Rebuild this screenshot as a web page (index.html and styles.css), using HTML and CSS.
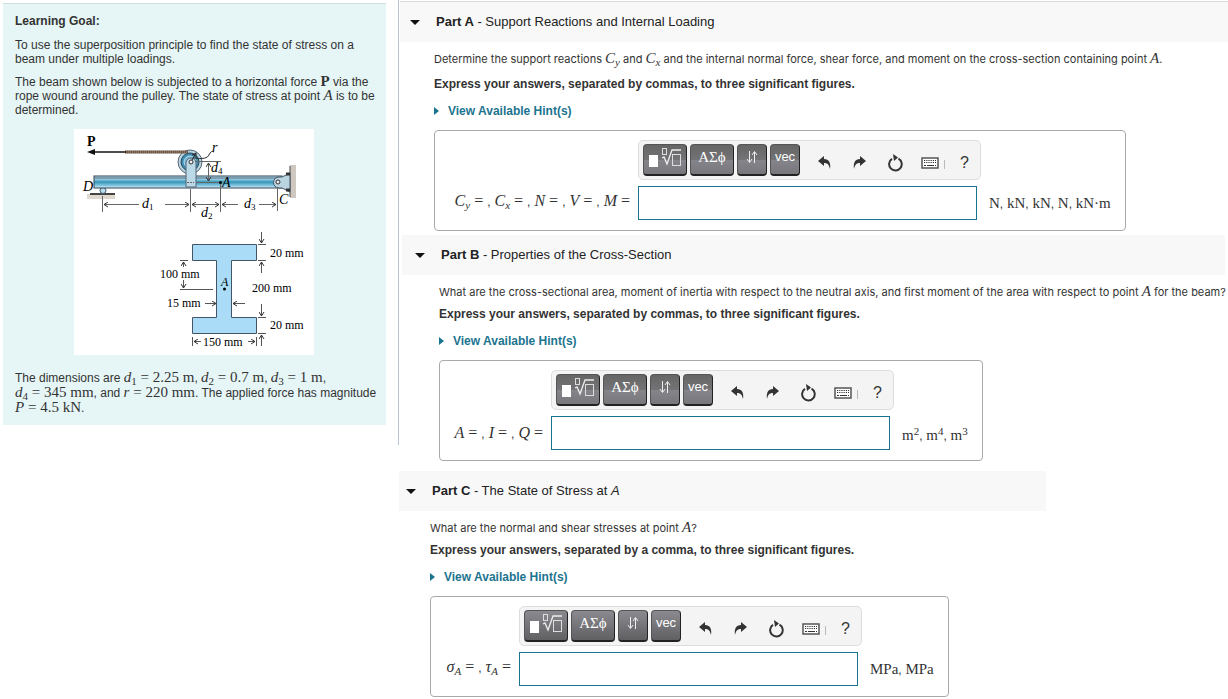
FILE: index.html
```html
<!DOCTYPE html>
<html lang="en">
<head>
    <meta charset="UTF-8">
    <meta name="viewport" content="width=device-width, initial-scale=1.0">
    <title>Superposition of Stresses</title>
    <link rel="stylesheet" href="styles.css">
</head>
<body>

    <!-- shared toolbar icons -->
    <svg class="sprite" aria-hidden="true">
        <symbol id="icon-template" viewBox="0 0 34 22">
            <rect x="1" y="9" width="9" height="12" fill="#fff"/>
            <path d="M14 12l2-1 3 7 5-14h9" fill="none" stroke="#eee" stroke-width="1.3"/>
            <rect x="14.500" y="2.500" width="4" height="6" fill="none" stroke="#ddd"/>
            <rect x="24.500" y="8.500" width="8" height="11" fill="none" stroke="#ddd"/>
        </symbol>
        <symbol id="icon-arrows" viewBox="0 0 12 14">
            <path d="M3.500 1v11M1 9l2.500 3.500L6 9M8.500 13V2M6 5l2.500-3.500L11 5" fill="none" stroke="#eee"/>
        </symbol>
        <symbol id="icon-undo" viewBox="0 0 14 14">
            <path d="M0 5L6 0v3c5 0 7 4 6 10-1-4-2-6-6-6v3z"/>
        </symbol>
        <symbol id="icon-redo" viewBox="0 0 14 14">
            <path d="M13 5L7 0v3C2 3 0 7 1 13c1-4 2-6 6-6v3z"/>
        </symbol>
        <symbol id="icon-reset" viewBox="0 0 16 18">
            <path d="M11.500 4.600A6.300 6.300 0 1 1 5 4.800" fill="none" stroke="#333" stroke-width="2"/>
            <path d="M6 0l5 3.500L7 7z"/>
        </symbol>
        <symbol id="icon-keyboard" viewBox="0 0 18 12">
            <rect x="1" y="1" width="16" height="10" fill="#fff" stroke="#555" stroke-width="1.500"/>
            <path d="M3 3.500h12M3 5.500h12" stroke="#333" stroke-width="1.200" stroke-dasharray="1.200 1"/>
            <path d="M3 8.500h2M6 8.500h7M14 8.500h1" stroke="#333" stroke-width="1.200"/>
        </symbol>
    </svg>

    <div class="page">
        <aside class="sidebar">
            <div class="goal">
                <h1>Learning Goal:</h1>
                <p>To use the superposition principle to find the state of stress on a<br>
                beam under multiple loadings.</p>
                <p>The beam shown below is subjected to a horizontal force <b class="math">P</b> via the rope wound around the pulley. The state of stress at point <i class="math">A</i> is to be determined.</p>

                <svg class="figure" viewBox="0 0 240 226" role="img" aria-label="Beam with pulley and its cross-section">
                    <defs>
                        <linearGradient id="beam" x1="0" y1="0" x2="0" y2="1">
                            <stop offset="0" stop-color="#b5dff0"/>
                            <stop offset="0.250" stop-color="#9fd3e9"/>
                            <stop offset="0.500" stop-color="#3593b5"/>
                            <stop offset="0.800" stop-color="#86c8e2"/>
                            <stop offset="1" stop-color="#d3eef8"/>
                        </linearGradient>
                        <marker id="tip" viewBox="0 0 6 6" refX="5" refY="3" markerWidth="6" markerHeight="6" orient="auto-start-reverse">
                            <path d="M1 0.500L5 3L1 5.500" fill="none" stroke="#333"/>
                        </marker>
                    </defs>

                    <!-- beam and supports -->
                    <rect x="13" y="65" width="28" height="5" fill="#ded8cf"/>
                    <path d="M16 65h25" stroke="#444" stroke-width="2"/>
                    <circle cx="29" cy="61.500" r="3" fill="#b5dff0" stroke="#456"/>
                    <rect x="216" y="36" width="6" height="33" fill="#cfc8c0"/>
                    <path d="M216 37v31" stroke="#444"/>
                    <rect x="20" y="47" width="188" height="12" fill="url(#beam)" stroke="#345"/>
                    <path d="M20 49h188" stroke="#567"/>
                    <path d="M216 44l-8 4h-3a5.500 5.500 0 0 0 0 11h3l8 4z" fill="#b9d3df" stroke="#456"/>
                    <circle cx="204" cy="53" r="2" fill="#eee" stroke="#333"/>
                    <path d="M212 45h4M212 61h4" stroke="#333" stroke-width="3"/>

                    <!-- pulley and rope -->
                    <circle cx="116" cy="33" r="12" fill="#bcd5e3" stroke="#567"/>
                    <circle cx="116" cy="33" r="9" fill="#3f8fb4" stroke="#245"/>
                    <circle cx="116" cy="33" r="6" fill="#79b6d2" stroke="#b7dcec"/>
                    <path d="M112 58V34a4.500 4.500 0 0 1 10 0v24z" fill="#bcd9e8" stroke="#567"/>
                    <circle cx="117" cy="33" r="2" fill="#eee" stroke="#333"/>
                    <path d="M51 23h63" stroke="#6b5544" stroke-width="3"/>
                    <path d="M52 23h62" stroke="#b29a80" stroke-dasharray="1 1"/>
                    <path d="M18 23h34" stroke="#111" stroke-width="1.500"/>
                    <path d="M13 23l8-3v6z" fill="#111"/>
                    <path d="M118 31l4-7" stroke="#222" marker-end="url(#tip)"/>
                    <path d="M120 29q13 2 15-3t5-3" fill="none" stroke="#333"/>

                    <!-- beam dimensions -->
                    <g fill="none" stroke="#666">
                        <path d="M28.500 67v16M116.500 60v23M146.500 54v29M203.500 58v24M121 32.500h26"/>
                        <path d="M113 53.500h7" stroke-dasharray="2 1"/>
                        <path d="M122 53.500h24"/>
                        <path d="M65 75.500H30" marker-end="url(#tip)"/>
                        <path d="M91 75.500h24" marker-end="url(#tip)"/>
                        <path d="M118 75.500h27" marker-start="url(#tip)" marker-end="url(#tip)"/>
                        <path d="M164 75.500h-16" marker-end="url(#tip)"/>
                        <path d="M185 75.500h17" marker-end="url(#tip)"/>
                        <path d="M134.500 34v18" marker-start="url(#tip)" marker-end="url(#tip)"/>
                    </g>
                    <circle cx="146.500" cy="53.500" r="1.500"/>
                    <g class="beam-label">
                        <text x="13" y="17" class="force">P</text>
                        <text x="9" y="62">D</text>
                        <text x="138" y="23">r</text>
                        <text x="148" y="58">A</text>
                        <text x="205" y="75">C</text>
                        <text x="68" y="79">d<tspan class="index" dy="2">1</tspan></text>
                        <text x="127" y="88">d<tspan class="index" dy="2">2</tspan></text>
                        <text x="170" y="79">d<tspan class="index" dy="2">3</tspan></text>
                        <text x="137" y="43">d<tspan class="index" dy="2">4</tspan></text>
                    </g>

                    <!-- cross-section -->
                    <path d="M118.500 115.500h64v16h-25v57h25v16h-64v-16h24v-57h-24z" fill="#aadcf7" stroke="#456"/>
                    <g fill="none" stroke="#555">
                        <path d="M184 115.500h8M184 131.500h8M184 188.500h8M184 204.500h8M106 131.500h8M106 160.500h33M118.500 208v9M182.500 208v9"/>
                        <path d="M187.500 103v11" marker-end="url(#tip)"/>
                        <path d="M187.500 144v-11" marker-end="url(#tip)"/>
                        <path d="M187.500 175v12" marker-end="url(#tip)"/>
                        <path d="M187.500 217v-11" marker-end="url(#tip)"/>
                        <path d="M109.500 138v-5" marker-end="url(#tip)"/>
                        <path d="M109.500 151v8" marker-end="url(#tip)"/>
                        <path d="M131 174.500h11" marker-end="url(#tip)"/>
                        <path d="M171 174.500h-12" marker-end="url(#tip)"/>
                        <path d="M127 212.500h-7" marker-end="url(#tip)"/>
                        <path d="M174 212.500h7" marker-end="url(#tip)"/>
                    </g>
                    <circle cx="150.500" cy="160" r="1.500"/>
                    <g class="section-label">
                        <text x="196" y="128">20 mm</text>
                        <text x="86" y="149">100 mm</text>
                        <text x="178" y="163">200 mm</text>
                        <text x="93" y="178">15 mm</text>
                        <text x="196" y="200">20 mm</text>
                        <text x="129" y="217">150 mm</text>
                        <text x="147" y="157" font-style="italic">A</text>
                    </g>
                </svg>

                <p class="dimensions">The dimensions are <span class="math"><i>d</i><sub>1</sub> = 2.25 m</span>, <span class="math"><i>d</i><sub>2</sub> = 0.7 m</span>, <span class="math"><i>d</i><sub>3</sub> = 1 m</span>,<br>
                <span class="math"><i>d</i><sub>4</sub> = 345 mm</span>, and <span class="math"><i>r</i> = 220 mm</span>. The applied force has magnitude <span class="math"><i>P</i> = 4.5 kN</span>.</p>
            </div>
        </aside>

        <main class="parts">
            <section class="part part-a">
                <h2 class="part-header">
                    <button type="button" class="part-toggle"><span class="caret"></span><span><b>Part A</b> - Support Reactions and Internal Loading</span></button>
                </h2>
                <div class="part-body">
                    <p class="question">Determine the support reactions <span class="math"><i>C<sub>y</sub></i></span> and <span class="math"><i>C<sub>x</sub></i></span> and the internal normal force, shear force, and moment on the cross-section containing point <i class="math">A</i>.</p>
                    <p class="instructions">Express your answers, separated by commas, to three significant figures.</p>
                    <a href="#" class="hints">View Available Hint(s)</a>
                    <form class="answer">
                        <div class="toolbar">
                            <button type="button" class="key key-wide" aria-label="Templates"><svg width="34" height="22"><use href="#icon-template"/></svg></button>
                            <button type="button" class="key key-wide greek">ΑΣϕ</button>
                            <button type="button" class="key" aria-label="Arrows"><svg width="12" height="14"><use href="#icon-arrows"/></svg></button>
                            <button type="button" class="key">vec</button>
                            <span class="tools">
                                <button type="button" class="tool" aria-label="Undo"><svg width="14" height="14"><use href="#icon-undo"/></svg></button>
                                <button type="button" class="tool" aria-label="Redo"><svg width="14" height="14"><use href="#icon-redo"/></svg></button>
                                <button type="button" class="tool" aria-label="Reset"><svg width="16" height="18"><use href="#icon-reset"/></svg></button>
                                <button type="button" class="tool tool-keyboard" aria-label="Keyboard shortcuts"><svg width="18" height="12"><use href="#icon-keyboard"/></svg></button>
                                <button type="button" class="tool tool-help">?</button>
                            </span>
                        </div>
                        <label for="answer-a" class="math"><i>C<sub>y</sub></i> = <s>,</s> <i>C<sub>x</sub></i> = <s>,</s> <i>N</i> = <s>,</s> <i>V</i> = <s>,</s> <i>M</i> =</label>
                        <input type="text" id="answer-a">
                        <span class="units math">N<s>,</s> kN<s>,</s> kN<s>,</s> N<s>,</s> kN·m</span>
                    </form>
                </div>
            </section>

            <section class="part part-b">
                <h2 class="part-header">
                    <button type="button" class="part-toggle"><span class="caret"></span><span><b>Part B</b> - Properties of the Cross-Section</span></button>
                </h2>
                <div class="part-body">
                    <p class="question">What are the cross-sectional area, moment of inertia with respect to the neutral axis, and first moment of the area with respect to point <i class="math">A</i> for the beam?</p>
                    <p class="instructions">Express your answers, separated by commas, to three significant figures.</p>
                    <a href="#" class="hints">View Available Hint(s)</a>
                    <form class="answer">
                        <div class="toolbar">
                            <button type="button" class="key key-wide" aria-label="Templates"><svg width="34" height="22"><use href="#icon-template"/></svg></button>
                            <button type="button" class="key key-wide greek">ΑΣϕ</button>
                            <button type="button" class="key" aria-label="Arrows"><svg width="12" height="14"><use href="#icon-arrows"/></svg></button>
                            <button type="button" class="key">vec</button>
                            <span class="tools">
                                <button type="button" class="tool" aria-label="Undo"><svg width="14" height="14"><use href="#icon-undo"/></svg></button>
                                <button type="button" class="tool" aria-label="Redo"><svg width="14" height="14"><use href="#icon-redo"/></svg></button>
                                <button type="button" class="tool" aria-label="Reset"><svg width="16" height="18"><use href="#icon-reset"/></svg></button>
                                <button type="button" class="tool tool-keyboard" aria-label="Keyboard shortcuts"><svg width="18" height="12"><use href="#icon-keyboard"/></svg></button>
                                <button type="button" class="tool tool-help">?</button>
                            </span>
                        </div>
                        <label for="answer-b" class="math"><i>A</i> = <s>,</s> <i>I</i> = <s>,</s> <i>Q</i> =</label>
                        <input type="text" id="answer-b">
                        <span class="units math">m<sup>2</sup><s>,</s> m<sup>4</sup><s>,</s> m<sup>3</sup></span>
                    </form>
                </div>
            </section>

            <section class="part part-c">
                <h2 class="part-header">
                    <button type="button" class="part-toggle"><span class="caret"></span><span><b>Part C</b> - The State of Stress at <i>A</i></span></button>
                </h2>
                <div class="part-body">
                    <p class="question">What are the normal and shear stresses at point <i class="math">A</i>?</p>
                    <p class="instructions">Express your answers, separated by a comma, to three significant figures.</p>
                    <a href="#" class="hints">View Available Hint(s)</a>
                    <form class="answer">
                        <div class="toolbar">
                            <button type="button" class="key key-wide" aria-label="Templates"><svg width="34" height="22"><use href="#icon-template"/></svg></button>
                            <button type="button" class="key key-wide greek">ΑΣϕ</button>
                            <button type="button" class="key" aria-label="Arrows"><svg width="12" height="14"><use href="#icon-arrows"/></svg></button>
                            <button type="button" class="key">vec</button>
                            <span class="tools">
                                <button type="button" class="tool" aria-label="Undo"><svg width="14" height="14"><use href="#icon-undo"/></svg></button>
                                <button type="button" class="tool" aria-label="Redo"><svg width="14" height="14"><use href="#icon-redo"/></svg></button>
                                <button type="button" class="tool" aria-label="Reset"><svg width="16" height="18"><use href="#icon-reset"/></svg></button>
                                <button type="button" class="tool tool-keyboard" aria-label="Keyboard shortcuts"><svg width="18" height="12"><use href="#icon-keyboard"/></svg></button>
                                <button type="button" class="tool tool-help">?</button>
                            </span>
                        </div>
                        <label for="answer-c" class="math"><i>σ<sub>A</sub></i> = <s>,</s> <i>τ<sub>A</sub></i> =</label>
                        <input type="text" id="answer-c">
                        <span class="units math">MPa<s>,</s> MPa</span>
                    </form>
                </div>
            </section>
        </main>
    </div>

</body>
</html>
```
FILE: styles.css
```css
* {
    box-sizing: border-box;
}
body {
    margin: 0;
    background: #fff;
    color: #333;
    font-family: "Liberation Sans", Arial, sans-serif;
    font-size: 12px;
    line-height: 14px;
}
h1, h2, p {
    margin: 0;
    font-size: 12px;
}
button {
    padding: 0;
    border: none;
    background: none;
    color: inherit;
    font: inherit;
    cursor: pointer;
}
.sprite {
    display: none;
}
.page {
    display: grid;
    grid-template-columns: 399px minmax(0, 1fr);
    align-items: start;
}

/* math */
.math {
    font-family: "Liberation Serif", "Times New Roman", serif;
    font-size: 15px;
    line-height: 0;
    white-space: nowrap;
}
.math sub, .math sup {
    font-size: 11px;
    line-height: 0;
}
.math sub {
    vertical-align: -3px;
}
.math sup {
    vertical-align: 5px;
}
.math s {
    font-family: "Liberation Sans", Arial, sans-serif;
    font-size: 12px;
    text-decoration: none;
}

/* learning goal */
.sidebar {
    padding: 3px 12px 20px 3px;
    border-right: 1px solid #b8c4d6;
}
.goal {
    padding: 10px 8px 9px 12px;
    border-top: 1px solid #cfdfe0;
    background: #e6f5f6;
}
.goal h1 {
    margin-bottom: 10px;
}
.goal p {
    margin-bottom: 9px;
}
.figure {
    display: block;
    width: 240px;
    height: 226px;
    margin: 12px auto 16px 59px;
    background: #fff;
}
.goal .dimensions {
    margin-bottom: 0;
    line-height: 15px;
}
.beam-label {
    font: italic 14px "Liberation Serif", serif;
}
.beam-label .force {
    font-style: normal;
    font-weight: bold;
}
.beam-label .index {
    font-size: 9px;
    font-style: normal;
}
.section-label {
    font: 12px "Liberation Serif", serif;
}

/* parts */
.part {
    --indent: 10px;
    --label: 186px;
}
.part-a {
    margin-left: 1px;
    padding-top: 1px;
}
.part-b {
    --indent: 13px;
    --label: 94px;
    margin: 4px 3px 0;
}
.part-c {
    --indent: 7px;
    --label: 71px;
    margin-top: 10px;
}
.part-header {
    display: flex;
    height: 40px;
    padding-left: var(--indent);
    background: #f8f8f8;
    font-weight: normal;
}
.part-a .part-header {
    height: 41px;
    border-top: 1px solid #d5dbdd;
}
.part-c .part-header {
    width: 78%;
}
.part-toggle {
    display: flex;
    align-items: center;
    gap: 16px;
    color: #222;
    font-size: 13px;
}
.caret {
    border: 5px solid transparent;
    border-top: 5px solid #111;
    border-bottom: none;
}
.part-body {
    padding: 10px 0 0 calc(var(--indent) + 24px);
}
.question {
    margin-bottom: 8px;
    font-family: Inter, Arial, sans-serif;
    font-size: 11px;
}
.part-a .question {
    margin-bottom: 11px;
}
.part-b .question {
    white-space: nowrap;
}
.instructions {
    margin-bottom: 13px;
    font-weight: bold;
}
.hints {
    display: flex;
    align-items: center;
    gap: 9px;
    width: fit-content;
    margin-bottom: 12px;
    color: #1b748f;
    font-weight: bold;
    text-decoration: none;
}
.hints::before {
    content: "";
    border: 4px solid transparent;
    border-left: 5px solid #1b748f;
    border-right: none;
}

/* answer box */
.answer {
    display: grid;
    grid-template-columns: var(--label) 339px auto;
    column-gap: 8px;
    row-gap: 6px;
    align-items: center;
    width: fit-content;
    padding: 9px 14px 10px 9px;
    border: 1px solid #aaa;
    border-radius: 4px;
}
.answer label {
    font-size: 16px;
    text-align: right;
}
.answer input {
    width: 100%;
    height: 34px;
    padding: 0 8px;
    border: 1px solid #1b748f;
    background: #fff;
    font-size: 14px;
}
.units {
    padding-left: 4px;
}
.toolbar {
    display: flex;
    gap: 3px;
    grid-column: 2 / 4;
    justify-self: start;
    width: 343px;
    height: 40px;
    padding: 3px 0 3px 4px;
    border: 1px solid #ddd;
    border-radius: 5px;
    background: #f4f4f4;
}
.key {
    flex: none;
    width: 30px;
    height: 32px;
    padding-bottom: 6px;
    border: 1px solid #555;
    border-right-color: #222;
    border-bottom: 2px solid #222;
    border-radius: 4px;
    background: linear-gradient(#666 0%, #737376 50%, #85858b 50%, #77777c 100%);
    color: #fff;
    font-size: 13px;
}
.key svg {
    display: block;
    margin: 0 auto;
}
.key-wide {
    width: 44px;
}
.part-c .key {
    background: linear-gradient(#8a8a90, #606063);
}
.greek {
    font-family: "Liberation Serif", serif;
    font-size: 15px;
}
.tools {
    display: flex;
    align-items: center;
    padding: 6px 0 0 4px;
}
.tool {
    display: flex;
    align-items: center;
    justify-content: center;
    width: 35px;
    height: 26px;
    color: #333;
    fill: #333;
}
.tool-keyboard {
    position: relative;
}
.tool-keyboard::after {
    content: "";
    position: absolute;
    top: 10px;
    right: 2px;
    width: 1px;
    height: 9px;
    background: #bbb;
}
.tool-help {
    font-size: 16px;
}
```
